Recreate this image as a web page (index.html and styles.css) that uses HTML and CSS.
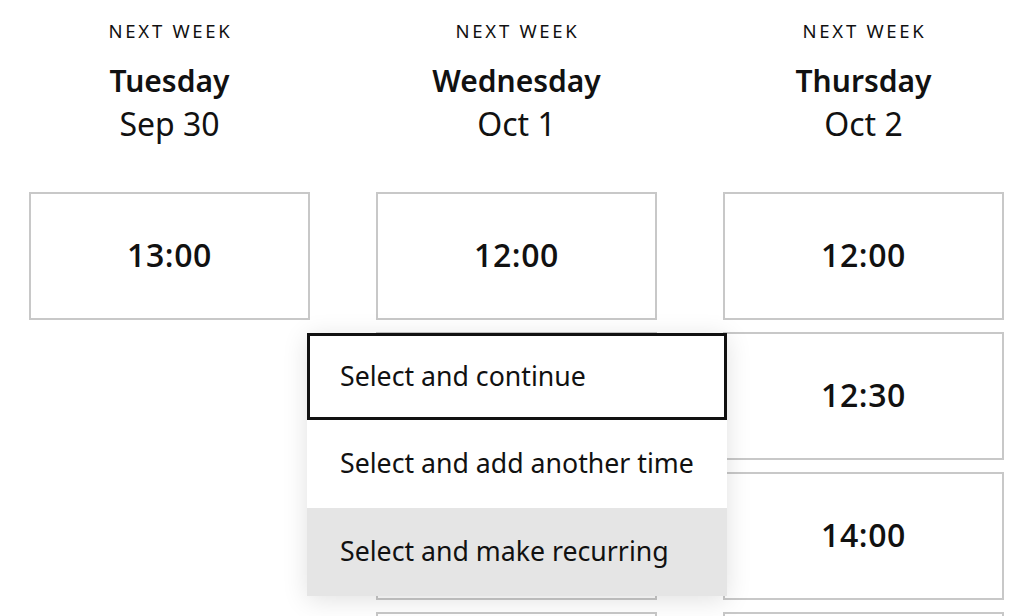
FILE: index.html
```html
<!DOCTYPE html>
<html>
<head>
<meta charset="utf-8">
<link rel="stylesheet" href="styles.css">
</head>
<body>
<div class="grid">
  <div class="col">
    <div class="head">
      <div class="eyebrow">Next week</div>
      <div class="day">Tuesday</div>
      <div class="date">Sep 30</div>
    </div>
    <div class="slots">
      <div class="slot">13:00</div>
    </div>
  </div>
  <div class="col anchor">
    <div class="head">
      <div class="eyebrow">Next week</div>
      <div class="day">Wednesday</div>
      <div class="date">Oct 1</div>
    </div>
    <div class="slots">
      <div class="slot">12:00</div>
      <div class="slot">12:30</div>
      <div class="slot">13:30</div>
      <div class="slot">14:00</div>
    </div>
    <div class="menu">
      <div class="item focused">Select and continue</div>
      <div class="item">Select and add another time</div>
      <div class="item hover">Select and make recurring</div>
    </div>
  </div>
  <div class="col">
    <div class="head">
      <div class="eyebrow">Next week</div>
      <div class="day">Thursday</div>
      <div class="date">Oct 2</div>
    </div>
    <div class="slots">
      <div class="slot">12:00</div>
      <div class="slot">12:30</div>
      <div class="slot">14:00</div>
      <div class="slot">15:00</div>
    </div>
  </div>
</div>
</body>
</html>
```
FILE: styles.css
```css
html, body {
  margin: 0;
  padding: 0;
  background: #fff;
  overflow: hidden;
  height: 616px;
}
body {
  font-family: "Noto Sans", "Open Sans", sans-serif;
  color: #111;
}
.grid {
  display: grid;
  grid-template-columns: 281px 281px 281px;
  column-gap: 66px;
  padding-left: 29px;
}
.col {
  display: flex;
  flex-direction: column;
}
.anchor {
  position: relative;
}
.head {
  text-align: center;
  height: 192px;
  padding-top: 18px;
  box-sizing: border-box;
}
.eyebrow {
  font-size: 18.5px;
  letter-spacing: 2.7px;
  text-transform: uppercase;
  line-height: 26px;
  padding-left: 2px;
}
.day {
  margin-top: 17px;
  font-size: 30px;
  font-weight: 600;
  line-height: 40px;
}
.date {
  font-size: 32px;
  line-height: 42px;
  margin-top: 2px;
}
.slots {
  display: flex;
  flex-direction: column;
  gap: 12px;
}
.slot {
  height: 128px;
  box-sizing: border-box;
  border: 2px solid #c8c8c8;
  display: flex;
  align-items: center;
  justify-content: center;
  font-family: "Open Sans", "Noto Sans", sans-serif;
  font-weight: 600;
  font-size: 32px;
  letter-spacing: 0.6px;
  padding-bottom: 4px;
}
.menu {
  position: absolute;
  left: -69px;
  top: 333px;
  width: 420px;
  background: #fff;
  box-shadow: 0 4px 24px rgba(0,0,0,0.12);
  display: flex;
  flex-direction: column;
}
.item {
  height: 88px;
  box-sizing: border-box;
  padding-left: 33px;
  padding-bottom: 3px;
  display: flex;
  align-items: center;
  font-size: 26.7px;
}
.item.focused {
  height: 87px;
  border: 3px solid #111;
  padding-left: 30px;
}
.item.hover {
  background: #e5e5e5;
}
```
